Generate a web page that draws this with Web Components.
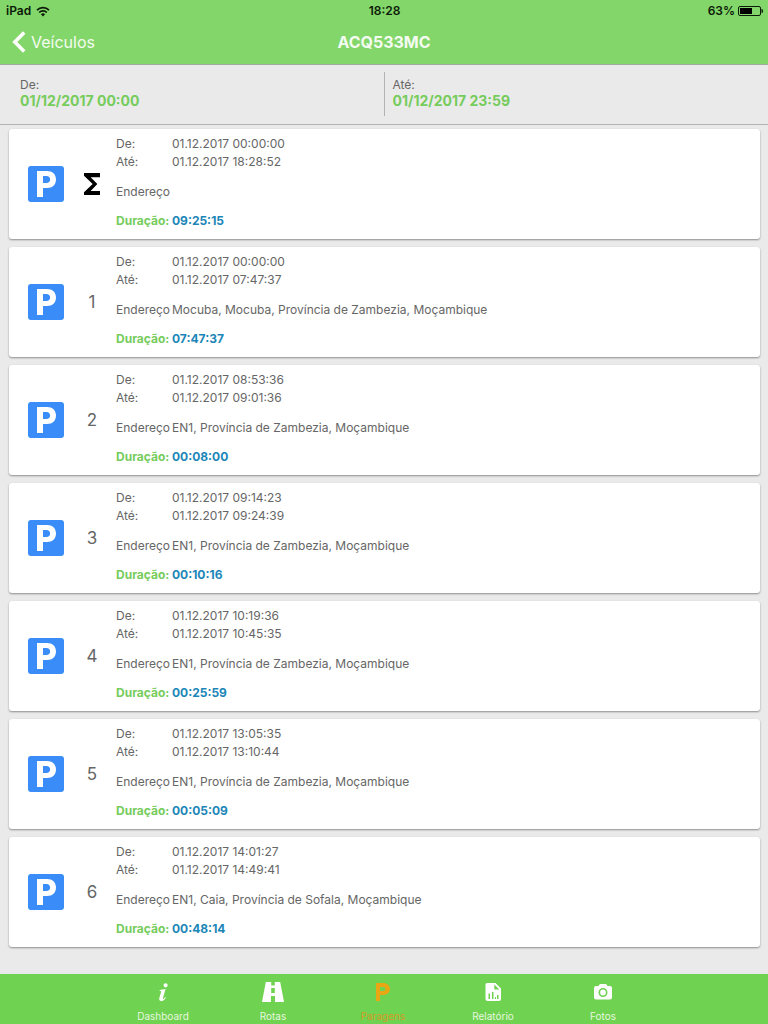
<!DOCTYPE html>
<html lang="pt">
<head>
<meta charset="utf-8">
<meta name="viewport" content="width=device-width, initial-scale=1">
<title>ACQ533MC</title>
<style>
  html { height: 100%; }
  body {
    margin: 0;
    min-height: 100%;
    background: #eaeaea;
    color: #666;
    font-family: Inter, "Liberation Sans", sans-serif;
    font-size: 12px;
  }
</style>
</head>
<body>
<stops-page></stops-page>

<script>
const define = (name, html, setup) => {
  const template = document.createElement('template');
  template.innerHTML = html;
  customElements.define(name, class extends HTMLElement {
    connectedCallback() {
      if (this.shadowRoot) return;
      const root = this.attachShadow({ mode: 'open' });
      root.append(template.content.cloneNode(true));
      if (setup) setup(this, root);
    }
  });
};

const icons = {
  info: '<path d="M14.6 3.2a2.1 2.1 0 1 1 0 4.2 2.1 2.1 0 0 1 0-4.2zM14.6 9l-2.5 8.4c-.3 1-.3 1.5.1 1.5.5 0 1.100-.7 1.900-1.900l.7.400c-1.300 2.500-2.900 3.700-4.500 3.700-1.700 0-2.500-1.200-2-3l1.700-5.800c.3-1 .1-1.500-1.400-1.600v-.7z"/>',
  road: '<path d="M4.800 2H10.200V5.600H13.800V2H19.200L23 22H14V16H10V22H1zM10.200 8V13H13.800V8z" fill-rule="evenodd"/>',
  parking: '<path d="M12 3H5v18h4v-6h3c3.600 0 7-2.300 7-6s-3.400-6-7-6zm.2 8H9V7h3.200c1.300 0 2.300.9 2.300 2s-1 2-2.300 2z"/>',
  report: '<path fill-rule="evenodd" d="M6 3h8.500L20 8.500V19a2 2 0 0 1-2 2H6.500a2 2 0 0 1-2-2V4.500A1.500 1.500 0 0 1 6 3zm7.300 1.500V9.500h5zM7.500 13.500v5.500H9v-5.500zM11 12v7h1.500v-7zM14 17v2h1v-2zM16 15v4h1.500v-4z"/>',
  camera: '<path fill-rule="evenodd" d="M9 4h6l1.600 2H19a2 2 0 0 1 2 2v9.500a2 2 0 0 1-2 2H5a2 2 0 0 1-2-2V8a2 2 0 0 1 2-2h2.400zM12 8a4.500 4.500 0 1 0 0 9 4.500 4.500 0 0 0 0-9zm0 1.600a2.900 2.900 0 1 1 0 5.800 2.900 2.900 0 0 1 0-5.800z"/>'
};

define('status-bar', `
  <style>
    :host { display: grid; grid-template-columns: 1fr auto 1fr; align-items: center; height: 20px;
      padding: 2px 5px 0 6px; box-sizing: border-box; color: #0c1a08; font-size: 12px; font-weight: 600; line-height: 18px; }
    div { display: flex; align-items: center; gap: 5px; }
    .end { justify-content: flex-end; gap: 3px; }
    svg { display: block; }
  </style>
  <div><span>iPad</span>
    <svg width="14" height="11" viewBox="0 0 14 11" fill="none" stroke="currentColor" stroke-width="1.700" aria-hidden="true">
      <path d="M1 4.200a8.500 8.500 0 0 1 12 0M3.200 6.500a5.400 5.400 0 0 1 7.600 0"/>
      <path d="M7 10.400 4.900 8.300a3 3 0 0 1 4.200 0z" fill="currentColor" stroke="none"/>
    </svg></div>
  <span>18:28</span>
  <div class="end"><span>63%</span>
    <svg width="25" height="10" viewBox="0 0 25 10" aria-hidden="true">
      <rect x=".5" y=".5" width="22" height="9" rx="1.500" fill="none" stroke="currentColor"/>
      <rect x="2" y="2" width="12" height="6" fill="#000"/>
      <path d="M23.500 3h.5q1 0 1 2t-1 2h-.5z" fill="currentColor"/>
    </svg></div>
`);

define('nav-bar', `
  <style>
    :host { display: grid; grid-template-columns: 1fr auto 1fr; align-items: center; height: 44px; padding: 0 12px; color: #fff; }
    a { display: flex; align-items: center; gap: 5px; color: #f4fcf1; font-size: 16px; text-decoration: none; }
    h1 { margin: 0; font-size: 16px; font-weight: 700; color: #f4fcf1; }
    svg { display: block; }
  </style>
  <a href="#veiculos">
    <svg width="14" height="22" viewBox="0 0 14 22" fill="none" stroke="#fff" stroke-width="3.600" aria-hidden="true"><path d="M12.200 1.600 2.800 11l9.400 9.400"/></svg>
    <span>Veículos</span></a>
  <h1><slot></slot></h1>
`);

define('date-field', `
  <style>
    :host { display: block; flex: 1; }
    button { display: block; width: 100%; padding: 5px 8px; border: 0; background: none; font: inherit; color: inherit; text-align: left; }
    span, strong { display: block; line-height: 16px; }
    span { font-size: 12px; }
    strong { font-size: 14px; font-weight: 700; color: #76cc5c; }
  </style>
  <button type="button"><span></span><strong><slot></slot></strong></button>
`, (host, root) => { root.querySelector('span').textContent = host.getAttribute('label'); });

define('date-range', `
  <style>
    :host { display: flex; box-sizing: border-box; height: 60px; padding: 7px 12px 8px; border-bottom: 1px solid #b2b2b2; }
    ::slotted(:last-child) { border-left: 1px solid #b2b2b2; }
  </style>
  <slot></slot>
`);

define('stop-card', `
  <style>
    :host { display: grid; grid-template-columns: 74px 18px 1fr; align-items: center; padding: 6px 8px 9px 0;
      background: #fff; border-radius: 3px; box-shadow: 0 1px 2px rgba(0,0,0,.4); }
    svg { display: block; }
    .sign { justify-self: center; }
    .sign, .index { margin-top: 2px; }
    .index { display: flex; justify-content: center; font-size: 17px; }
    dl { display: grid; grid-template-columns: 56px 1fr; margin: 0 0 0 15px; line-height: 18px; font-size: 12px; }
    dt, dd { margin: 0; white-space: nowrap; }
    .address { padding-top: 12px; }
    .total { padding-top: 11px; font-weight: 700; }
    dt.total { color: #76cc5c; }
    dd.total { color: #1c86b8; }
  </style>
  <svg class="sign" width="36" height="36" viewBox="0 0 36 36" role="img" aria-label="Paragem">
    <rect width="36" height="36" rx="3" fill="#3a8df8"/>
    <path fill="#fff" fill-rule="evenodd" d="M9 5h10c5.500 0 9 3.300 9 8.500S24.500 22 19 22h-4v9H9zM15 10v7h3.500c2.300 0 3.600-1.300 3.600-3.500S20.800 10 18.500 10z"/>
  </svg>
  <div class="index"></div>
  <dl>
    <dt>De:</dt><dd class="from"></dd>
    <dt>Até:</dt><dd class="to"></dd>
    <dt class="address">Endereço</dt><dd class="address"><slot></slot></dd>
    <dt class="total">Duração:</dt><dd class="total time"></dd>
  </dl>
`, (host, root) => {
  const index = root.querySelector('.index');
  if (host.hasAttribute('number')) index.textContent = host.getAttribute('number');
  else index.innerHTML = '<svg width="16" height="22" viewBox="6 4 12 16" preserveAspectRatio="none" role="img" aria-label="Total"><path d="M18 4H6v2l6.500 6L6 18v2h12v-3h-7l5-5-5-5h7z"/></svg>';
  root.querySelector('.from').textContent = '01.12.2017 ' + host.getAttribute('from');
  root.querySelector('.to').textContent = '01.12.2017 ' + host.getAttribute('to');
  root.querySelector('.time').textContent = host.getAttribute('duration');
});

define('tab-item', `
  <style>
    :host { display: block; flex: 0 1 110px; }
    a { display: flex; flex-direction: column; align-items: center; padding-top: 6px; gap: 4px; color: #fff; font-size: 10px; line-height: 16px; text-decoration: none; }
    a[aria-current] { color: #e8a713; }
    a[aria-current] span { color: #d39a25; }
    span { color: #e6f8df; }
    svg { display: block; width: 24px; height: 24px; fill: currentColor; }
  </style>
  <a><svg viewBox="0 0 24 24" aria-hidden="true"></svg><span><slot></slot></span></a>
`, (host, root) => {
  const a = root.querySelector('a');
  a.href = '#' + host.getAttribute('icon');
  if (host.hasAttribute('active')) a.setAttribute('aria-current', 'page');
  root.querySelector('svg').innerHTML = icons[host.getAttribute('icon')];
});

define('tab-bar', `
  <style>
    :host { display: flex; justify-content: center; box-sizing: border-box; height: 50px; padding-right: 2px; background: #6fd250; }
  </style>
  <slot></slot>
`);

define('stops-page', `
  <style>
    :host { display: flex; flex-direction: column; min-height: 100vh; }
    header { background: #83d669; border-bottom: 1px solid #9fac9b; }
    main { flex: 1; display: flex; flex-direction: column; gap: 8px; padding: 4px 8px 26px 9px; }
    tab-bar { position: sticky; bottom: 0; }
  </style>
  <header><status-bar></status-bar><nav-bar>ACQ533MC</nav-bar></header>
  <date-range>
    <date-field label="De:">01/12/2017 00:00</date-field>
    <date-field label="Até:">01/12/2017 23:59</date-field>
  </date-range>
  <main>
    <stop-card from="00:00:00" to="18:28:52" duration="09:25:15"></stop-card>
    <stop-card number="1" from="00:00:00" to="07:47:37" duration="07:47:37">Mocuba, Mocuba, Província de Zambezia, Moçambique</stop-card>
    <stop-card number="2" from="08:53:36" to="09:01:36" duration="00:08:00">EN1, Província de Zambezia, Moçambique</stop-card>
    <stop-card number="3" from="09:14:23" to="09:24:39" duration="00:10:16">EN1, Província de Zambezia, Moçambique</stop-card>
    <stop-card number="4" from="10:19:36" to="10:45:35" duration="00:25:59">EN1, Província de Zambezia, Moçambique</stop-card>
    <stop-card number="5" from="13:05:35" to="13:10:44" duration="00:05:09">EN1, Província de Zambezia, Moçambique</stop-card>
    <stop-card number="6" from="14:01:27" to="14:49:41" duration="00:48:14">EN1, Caia, Província de Sofala, Moçambique</stop-card>
  </main>
  <tab-bar>
    <tab-item icon="info">Dashboard</tab-item>
    <tab-item icon="road">Rotas</tab-item>
    <tab-item icon="parking" active>Paragens</tab-item>
    <tab-item icon="report">Relatório</tab-item>
    <tab-item icon="camera">Fotos</tab-item>
  </tab-bar>
`);
</script>
</body>
</html>
